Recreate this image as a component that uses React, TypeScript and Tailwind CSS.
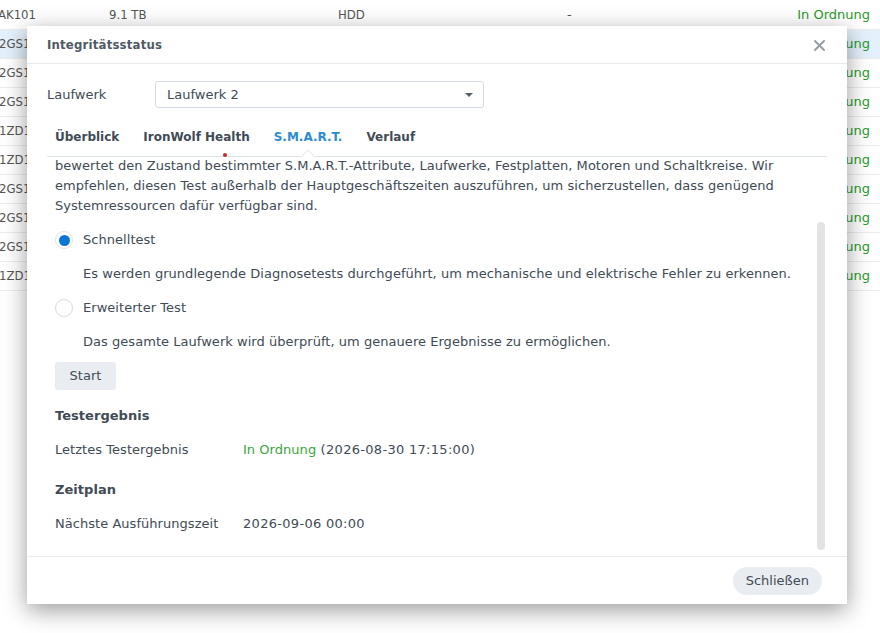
const SERIALS = ['2GS1A7K2', '2GS1B3M9', '2GS1C8Q4', '1ZD1E2R7', '1ZD1F5T3', '2GS1G9W1', '2GS1H4X6', '2GS1J6Y8', '1ZD1K1Z5'];

const BgTable = () => (
  <div className="flex flex-col pt-px" style={{ fontFamily: '"DejaVu Sans", sans-serif' }}>
    <div className="h-[29px] flex items-center border-b border-[#ececec] text-[13px] text-[#555]">
      <div className="w-[111px] -ml-[2px] font-['DejaVu_Sans_Condensed']">AK101</div>
      <div className="w-[229px] font-['DejaVu_Sans_Condensed']">9.1 TB</div>
      <div className="w-[229px] font-['DejaVu_Sans_Condensed']">HDD</div>
      <div className="flex-1">-</div>
      <div className="pr-[10px] text-[#2a9a2a]">In Ordnung</div>
    </div>
    {SERIALS.map((s, i) => (
      <div
        key={s}
        className={`h-[29px] flex items-center border-b border-[#ececec] text-[13px] text-[#555] ${i === 0 ? 'bg-[#e4f0fb]' : ''}`}
      >
        <div className="flex-1 -ml-[1px] font-['DejaVu_Sans_Condensed']">{s}</div>
        <div className="pr-[10px] text-[#2a9a2a]">In Ordnung</div>
      </div>
    ))}
  </div>
);

const Radio = ({ checked }: { checked: boolean }) =>
  checked ? (
    <span className="w-[18px] h-[18px] rounded-full border border-[#dfe6ee] bg-white flex items-center justify-center">
      <span className="w-[11px] h-[11px] rounded-full bg-[#0b77d5]" />
    </span>
  ) : (
    <span className="w-[18px] h-[18px] rounded-full border border-[#d6dbe1] bg-white" />
  );

export default function App() {
  return (
    <div className="relative w-[880px] h-[633px] overflow-hidden bg-white">
      <BgTable />

      {/* Dialog */}
      <div
        className="absolute left-[27px] top-[26px] w-[820px] h-[578px] bg-white flex flex-col shadow-[0_6px_22px_rgba(0,0,0,0.4)] text-[#414b55]"
        style={{ fontFamily: '"DejaVu Sans", Verdana, sans-serif' }}
      >
        {/* Header */}
        <div className="h-[38px] shrink-0 flex items-center justify-between px-[20px] border-b border-[#e9ecef]">
          <div className="font-['DejaVu_Sans_Condensed'] font-bold text-[13px] tracking-[0.2px] text-[#505a64] pt-[1px]">Integritätsstatus</div>
          <svg width="11" height="11" viewBox="0 0 11 11" className="mr-[2px] mt-[1px]">
            <path d="M1 1 L10 10 M10 1 L1 10" stroke="#959ba1" strokeWidth="1.8" strokeLinecap="round" />
          </svg>
        </div>

        {/* Drive select */}
        <div className="flex items-center px-[20px] mt-[17px] text-[13px]">
          <div className="w-[108px] pt-[1px]">Laufwerk</div>
          <div className="w-[329px] h-[27px] border border-[#d5dbe2] rounded-[3px] flex items-center justify-between pl-[11px] pr-[8px]">
            <span className="pt-[1px]">Laufwerk 2</span>
            <svg width="10" height="6" viewBox="0 0 10 6" className="mr-[1px]">
              <path d="M1 1 L5 5 L9 1 Z" fill="#55606b" />
            </svg>
          </div>
        </div>

        {/* Tabs */}
        <div className="relative mx-[20px] mt-[16px] flex gap-2 border-b border-[#dde2e7] text-[12px] font-bold">
          <div className="px-2 h-[32px] pb-[6px] flex items-center">Überblick</div>
          <div className="px-2 h-[32px] pb-[6px] flex items-center">IronWolf Health</div>
          <div className="relative px-2 h-[32px] pb-[6px] flex items-center text-[#2c8bd2]">
            S.M.A.R.T.
            <svg width="14" height="7" viewBox="0 0 14 7" className="absolute left-1/2 -translate-x-1/2 -bottom-[1px]">
              <path d="M0 7 L7 0 L14 7" fill="white" stroke="#dde2e7" strokeWidth="1" />
            </svg>
          </div>
          <div className="px-2 h-[32px] pb-[6px] flex items-center">Verlauf</div>
          <span className="absolute left-[176px] -bottom-[1px] w-[4px] h-[4px] rounded-full bg-[#d0262b]" />
        </div>

        {/* Scrolled content */}
        <div className="relative flex-1 overflow-hidden border-b border-[#e9ecef]">
          <div className="px-[28px] text-[13px] leading-[20px] -mt-[1px] tracking-[0.04px]">
            <p>
              bewertet den Zustand bestimmter S.M.A.R.T.-Attribute, Laufwerke, Festplatten, Motoren und Schaltkreise. Wir
              empfehlen, diesen Test außerhalb der Hauptgeschäftszeiten auszuführen, um sicherzustellen, dass genügend
              Systemressourcen dafür verfügbar sind.
            </p>

            <div className="flex items-center gap-[10px] mt-[14px]">
              <Radio checked />
              <span>Schnelltest</span>
            </div>
            <div className="pl-[28px] mt-[14px]">
              Es werden grundlegende Diagnosetests durchgeführt, um mechanische und elektrische Fehler zu erkennen.
            </div>

            <div className="flex items-center gap-[10px] mt-[14px]">
              <Radio checked={false} />
              <span>Erweiterter Test</span>
            </div>
            <div className="pl-[28px] mt-[14px]">
              Das gesamte Laufwerk wird überprüft, um genauere Ergebnisse zu ermöglichen.
            </div>

            <button className="mt-[10px] h-[28px] w-[61px] rounded-[3px] bg-[#e9edf2] text-[13px] text-[#414b55]">
              Start
            </button>

            <div className="mt-[16px] font-bold">Testergebnis</div>
            <div className="flex mt-[14px]">
              <div className="w-[188px]">Letztes Testergebnis</div>
              <div className="tracking-[0.3px]">
                <span className="text-[#3aa53a] tracking-[0.04px]">In Ordnung</span> (2026-08-30 17:15:00)
              </div>
            </div>

            <div className="mt-[20px] font-bold">Zeitplan</div>
            <div className="flex mt-[14px]">
              <div className="w-[188px]">Nächste Ausführungszeit</div>
              <div className="tracking-[0.3px]">2026-09-06 00:00</div>
            </div>
          </div>

          {/* scrollbar */}
          <div className="absolute left-[790px] top-[65px] w-[8px] h-[328px] rounded-full bg-[#e3e3e3]" />
        </div>

        {/* Footer */}
        <div className="h-[47px] shrink-0 flex items-center justify-end pr-[25px]">
          <button className="h-[28px] px-[13px] rounded-full bg-[#e9edf2] text-[13px] text-[#414b55]">Schließen</button>
        </div>
      </div>
    </div>
  );
}
